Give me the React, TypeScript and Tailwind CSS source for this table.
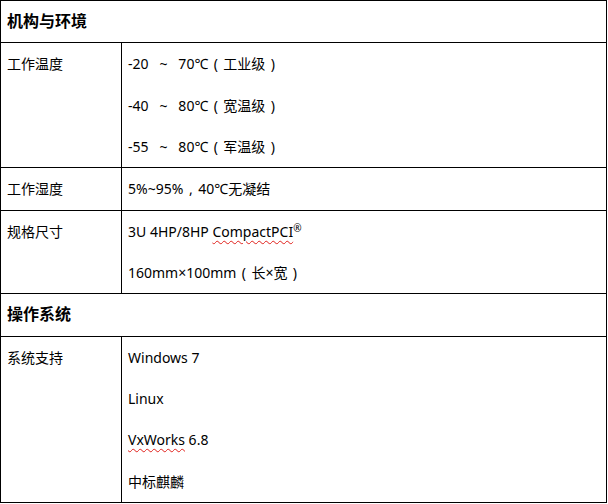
import React from 'react';

type Row =
  | { kind: 'section'; title: string }
  | { kind: 'item'; label: string; lines: React.ReactNode[] };

const spell = 'underline decoration-wavy decoration-[#e0201b] decoration-1 underline-offset-[3px]';

// full-width punctuation drawn centred in its em box, like the YaHei original
const FW = ({ ch }: { ch: string }) => (
  <span className="inline-block w-[15px] text-center">{ch}</span>
);

const temp = (from: string, to: string, grade: string) => (
  <>
    {`${from}   ~   ${to}℃`}
    <FW ch="(" />
    {grade}
    <FW ch=")" />
  </>
);

const rows: Row[] = [
  { kind: 'section', title: '机构与环境' },
  {
    kind: 'item',
    label: '工作温度',
    lines: [temp('-20', '70', '工业级'), temp('-40', '80', '宽温级'), temp('-55', '80', '军温级')],
  },
  {
    kind: 'item',
    label: '工作湿度',
    lines: [
      <>
        5%~95%
        <FW ch="," />
        40℃无凝结
      </>,
    ],
  },
  {
    kind: 'item',
    label: '规格尺寸',
    lines: [
      <>
        3U 4HP/8HP <span className={spell}>CompactPCI</span>
        <sup className="text-[10px]">®</sup>
      </>,
      <>
        160mm×100mm
        <FW ch="(" />
        长×宽
        <FW ch=")" />
      </>,
    ],
  },
  { kind: 'section', title: '操作系统' },
  {
    kind: 'item',
    label: '系统支持',
    lines: [
      'Windows 7',
      'Linux',
      <>
        <span className={spell}>VxWorks</span> 6.8
      </>,
      '中标麒麟',
    ],
  },
];

export default function App() {
  return (
    <div className="bg-white w-[608px] h-[504px] text-black font-['Noto_Sans','Noto_Sans_CJK_SC',sans-serif]">
      <table className="w-[607px] table-fixed border-collapse">
        <colgroup>
          <col className="w-[121px]" />
          <col />
        </colgroup>
        <tbody>
          {rows.map((row, i) =>
            row.kind === 'section' ? (
              <tr key={i}>
                <td colSpan={2} className="border border-black px-[6px] py-0 align-top">
                  <p className="leading-[41.33px] text-[16px] font-bold">{row.title}</p>
                </td>
              </tr>
            ) : (
              <tr key={i}>
                <td className="border border-black px-[6px] py-0 align-top">
                  <p className="leading-[41.33px] text-[14px]">{row.label}</p>
                </td>
                <td className="border border-black px-[6px] py-0 align-top">
                  {row.lines.map((line, j) => (
                    <p key={j} className="leading-[41.33px] text-[14px] whitespace-pre">
                      {line}
                    </p>
                  ))}
                </td>
              </tr>
            )
          )}
        </tbody>
      </table>
    </div>
  );
}
